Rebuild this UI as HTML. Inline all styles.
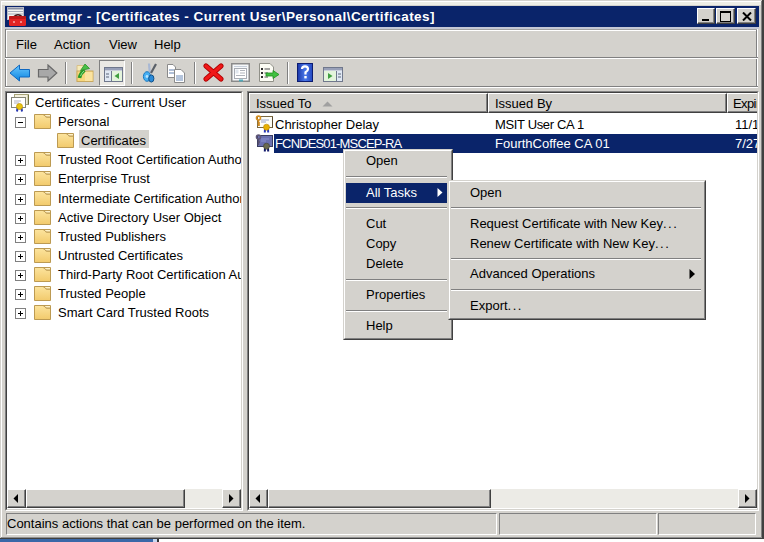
<!DOCTYPE html><html><head><meta charset="utf-8"><style>
*{margin:0;padding:0;box-sizing:border-box}
html,body{width:764px;height:542px;overflow:hidden;background:#d4d2cd}
body{position:relative;font-family:"Liberation Sans",sans-serif;font-size:13px;color:#000}
.a{position:absolute}
.t{position:absolute;white-space:pre;line-height:19px;height:19px;font-size:13px}
.w{color:#fff}
.r3{border-top:1px solid #808080;border-left:1px solid #808080;border-right:1px solid #fff;border-bottom:1px solid #fff}
.btn{position:absolute;background:#d4d2cd;border-top:1px solid #fff;border-left:1px solid #fff;border-right:1px solid #404040;border-bottom:1px solid #404040}
.btn>i{position:absolute;left:0;top:0;right:0;bottom:0;border-right:1px solid #808080;border-bottom:1px solid #808080}
.sep{position:absolute;height:2px;border-top:1px solid #808080;border-bottom:1px solid #fff}
.tsep{position:absolute;width:2px;height:22px;top:62px;border-left:1px solid #808080;border-right:1px solid #fff}
</style></head><body>

<svg width="0" height="0" style="position:absolute">
<defs>
<linearGradient id="gfold" x1="0" y1="0" x2="0" y2="1"><stop offset="0" stop-color="#fce49e"/><stop offset="1" stop-color="#f2ca6c"/></linearGradient>
<linearGradient id="ghelp" x1="0" y1="0" x2="1" y2="0"><stop offset="0" stop-color="#1a36a8"/><stop offset="0.5" stop-color="#4a78e8"/><stop offset="1" stop-color="#2448c0"/></linearGradient>
<linearGradient id="gback" x1="0" y1="0" x2="0" y2="1"><stop offset="0" stop-color="#6cc8ff"/><stop offset="1" stop-color="#0a84e0"/></linearGradient>
<symbol id="icfold" viewBox="0 0 17 16">
 <path d="M0.5 1.5 H9 Q10.5 1.5 11 3 Q11.5 4 13 4 H16.5 V15.5 H0.5 Z" fill="url(#gfold)" stroke="#bc9a52" stroke-width="1"/>
 <path d="M9 1.5 H16.5 V4 H13 Q11.5 4 11 3 Q10.5 1.5 9 1.5Z" fill="#fff2c8" stroke="#bc9a52" stroke-width="1"/>
</symbol>
<symbol id="icplus" viewBox="0 0 11 11">
 <rect x="0.5" y="0.5" width="10" height="10" fill="#fff" stroke="#808080"/>
 <rect x="3" y="5" width="5" height="1" fill="#000"/><rect x="5" y="3" width="1" height="5" fill="#000"/>
</symbol>
<symbol id="icminus" viewBox="0 0 11 11">
 <rect x="0.5" y="0.5" width="10" height="10" fill="#fff" stroke="#808080"/>
 <rect x="3" y="5" width="5" height="1" fill="#000"/>
</symbol>
<symbol id="icroot" viewBox="0 0 18 18">
 <rect x="3.5" y="0.5" width="14" height="10" fill="#f4f0dc" stroke="#a8a478"/>
 <path d="M17.5 1 V10.5" stroke="#707040" stroke-width="1.5"/>
 <rect x="0.5" y="3.5" width="14" height="10" fill="#fff" stroke="#868676"/>
 <path d="M3 7 H10 M3 9 H8" stroke="#b0b0c0" stroke-width="1"/>
 <path d="M6.5 14 L6 17.5 M10.5 14 L11 17.5" stroke="#2838b0" stroke-width="2"/>
 <circle cx="8.5" cy="12.5" r="3" fill="#e8c410" stroke="#c09000" stroke-width="0.7"/>
</symbol>
<symbol id="iccert" viewBox="0 0 18 18">
 <rect x="2.5" y="1.5" width="15" height="11" fill="#fdfdf6" stroke="#7a6840"/>
 <path d="M17.5 2 V12.5" stroke="#5a4a30" stroke-width="1"/>
 <path d="M6 5 H14 M6 7 H11" stroke="#98a4cc" stroke-width="1"/>
 <circle cx="3.5" cy="3" r="2" fill="none" stroke="#d89020" stroke-width="1.6"/>
 <path d="M3.5 5 V11 M3.5 8 H5 M3.5 10 H5" stroke="#d08a20" stroke-width="1.5"/>
 <path d="M10 13.5 L9.8 17.5 M13 13.5 L13.2 17.5" stroke="#2838b8" stroke-width="2"/>
 <circle cx="11.5" cy="12.2" r="3" fill="#e8b000" stroke="#b88800" stroke-width="0.6"/>
</symbol>
<symbol id="iccertsel" viewBox="0 0 18 18">
 <rect x="2.5" y="1.5" width="15" height="11" fill="#6a70b0" stroke="#383c60"/>
 <path d="M6 5 H14 M6 7 H11" stroke="#8890d0" stroke-width="1"/>
 <circle cx="3.5" cy="3" r="2" fill="none" stroke="#605878" stroke-width="1.6"/>
 <path d="M3.5 5 V11 M3.5 8 H5" stroke="#585070" stroke-width="1.5"/>
 <path d="M10 13.5 L9.8 17.5 M13 13.5 L13.2 17.5" stroke="#10186a" stroke-width="2"/>
 <circle cx="11.5" cy="12.2" r="3" fill="#6a6a50" stroke="#404030" stroke-width="0.6"/>
</symbol>
</defs></svg>

<div class="a" style="left:0;top:539px;width:153px;height:3px;background:#3a68a8"></div>
<div class="a" style="left:153px;top:539px;width:4px;height:3px;background:#c8d8f0"></div>
<div class="a" style="left:157px;top:539px;width:2px;height:3px;background:#333"></div>
<div class="a" style="left:159px;top:539px;width:605px;height:3px;background:#fff"></div>
<div class="a" style="left:1px;top:1px;width:761px;height:1px;background:#fff"></div>
<div class="a" style="left:2px;top:2px;width:759px;height:3px;background:#eeeee6"></div>
<div class="a" style="left:1px;top:1px;width:1px;height:537px;background:#fff"></div>
<div class="a" style="left:762px;top:0;width:2px;height:539px;background:#404040"></div>
<div class="a" style="left:761px;top:1px;width:1px;height:537px;background:#808080"></div>
<div class="a" style="left:0;top:538px;width:764px;height:1px;background:#404040"></div>
<div class="a" style="left:1px;top:537px;width:761px;height:1px;background:#909090"></div>
<div class="a" style="left:5px;top:6px;width:754px;height:21px;background:#0a246a"></div>
<svg class="a" style="left:7px;top:7px" width="19" height="19" viewBox="0 0 19 19">
<rect x="0.5" y="0.5" width="16" height="12" fill="#f4f4f0" stroke="#b8bcc8"/>
<rect x="1" y="1" width="15" height="1.5" fill="#8890a4"/>
<rect x="1" y="4" width="15" height="1" fill="#a8aebc"/>
<rect x="1" y="6.5" width="15" height="1" fill="#a8aebc"/>
<path d="M7 9.5 Q11 6 15 9.5" fill="none" stroke="#401818" stroke-width="1.6"/>
<rect x="2" y="9" width="17" height="10" rx="1.5" fill="#e42424"/>
<rect x="2" y="9" width="17" height="3" rx="1" fill="#c01818"/>
<circle cx="7" cy="15" r="1" fill="#f8a8a8"/><circle cx="14" cy="15" r="1" fill="#f8a8a8"/>
</svg>
<div class="a w" style="left:29px;top:7px;font-weight:bold;font-size:13.5px;letter-spacing:0.47px;line-height:19px;white-space:pre">certmgr - [Certificates - Current User\Personal\Certificates]</div>
<div class="btn" style="left:697px;top:8px;width:18px;height:16px"><i></i><div class="a" style="left:4px;top:10px;width:7px;height:2px;background:#000"></div></div>
<div class="btn" style="left:716px;top:8px;width:19px;height:16px"><i></i><div class="a" style="left:3px;top:2px;width:11px;height:11px;border:1px solid #000;border-top-width:2px"></div></div>
<div class="btn" style="left:737px;top:8px;width:19px;height:16px"><i></i><svg class="a" style="left:4px;top:3px" width="10" height="9"><path d="M1 0.5 L9 8.5 M9 0.5 L1 8.5" stroke="#000" stroke-width="2"/></svg></div>
<div class="a" style="left:5px;top:27px;width:754px;height:2px;background:#c4c8d6"></div>
<div class="a" style="left:5px;top:29px;width:753px;height:1px;background:#a0a0a0"></div>
<div class="a" style="left:5px;top:30px;width:753px;height:1px;background:#fff"></div>
<div class="a" style="left:756px;top:30px;width:1px;height:57px;background:#808080"></div>
<div class="a" style="left:757px;top:29px;width:1px;height:59px;background:#fff"></div>
<div class="a" style="left:5px;top:29px;width:1px;height:58px;background:#808080"></div>
<div class="a" style="left:6px;top:30px;width:1px;height:57px;background:#fff"></div>
<div class="a" style="left:5px;top:57px;width:753px;height:1px;background:#808080"></div>
<div class="a" style="left:5px;top:58px;width:753px;height:1px;background:#fff"></div>
<div class="a" style="left:5px;top:86px;width:753px;height:1px;background:#808080"></div>
<div class="a" style="left:5px;top:87px;width:753px;height:1px;background:#fff"></div>
<div class="t" style="left:16px;top:35px">File</div>
<div class="t" style="left:54px;top:35px">Action</div>
<div class="t" style="left:109px;top:35px">View</div>
<div class="t" style="left:154px;top:35px">Help</div>
<svg class="a" style="left:9px;top:64px" width="24" height="18" viewBox="0 0 24 18">
<path d="M1 9 L10.5 1 V5.5 H20.5 V13 H10.5 V17 Z" fill="url(#gback)" stroke="#1068c0" stroke-width="1"/>
</svg>
<svg class="a" style="left:37px;top:64px" width="22" height="18" viewBox="0 0 22 18">
<path d="M19.8 9 L11 1 V5.5 H1.5 V13 H11 V17 Z" fill="#a8a8a8" stroke="#686868" stroke-width="1.2"/>
</svg>
<div class="tsep" style="left:65px"></div>
<svg class="a" style="left:76px;top:63px" width="18" height="20" viewBox="0 0 18 20">
<path d="M1 2.5 H8 V18.5 H1 Z" fill="#f6eab8" stroke="#d8c088"/>
<rect x="1" y="8" width="16" height="10.5" fill="#f8d77c" stroke="#c8a860"/>
<rect x="9" y="9" width="7.5" height="9" fill="#fbe3a0"/>
<path d="M3.5 15 Q4.5 10 8.5 7" fill="none" stroke="#2a9a2a" stroke-width="3.6"/>
<path d="M4.5 7.5 L9 1 L13.5 5.5 Z" fill="#48c048" stroke="#2a902a" stroke-width="0.8"/>
<path d="M4.5 13 Q5.5 10 8 8" fill="none" stroke="#8ee08e" stroke-width="1"/>
</svg>
<div class="a" style="left:99px;top:60px;width:26px;height:26px;background:#ebe9e4;border-top:1px solid #808080;border-left:1px solid #808080;border-right:1px solid #fff;border-bottom:1px solid #fff"></div>
<svg class="a" style="left:104px;top:67px" width="19" height="15" viewBox="0 0 19 15">
<rect x="0.5" y="0.5" width="18" height="14" fill="#fff" stroke="#70788c"/>
<rect x="1" y="1" width="17" height="2.5" fill="#98a0b8"/>
<rect x="1" y="4" width="6" height="10" fill="#e0e8f4"/>
<path d="M7.5 4 V14" stroke="#70788c"/>
<rect x="8" y="4" width="10" height="10" fill="#e4f4dc"/>
<path d="M2 7 H5 M2 10 H5" stroke="#5a6478" stroke-width="1"/>
<path d="M15 6 L10.5 9 L15 12 Z" fill="#40a040"/>
</svg>
<div class="tsep" style="left:131px"></div>
<svg class="a" style="left:142px;top:62px" width="16" height="21" viewBox="0 0 16 21">
<path d="M7 1.5 L7.8 11" stroke="#a8b8d4" stroke-width="2.2"/>
<path d="M14 2 L9 11" stroke="#5a6068" stroke-width="2.2"/>
<ellipse cx="5" cy="14.5" rx="3.6" ry="4.8" fill="#48b0f4" stroke="#1a78c0" stroke-width="1"/>
<ellipse cx="9.3" cy="16.5" rx="2.6" ry="3.6" fill="#2a8ad8" stroke="#105088" stroke-width="1"/>
<circle cx="5" cy="14.5" r="1.4" fill="#b8e4ff"/>
</svg>
<svg class="a" style="left:166px;top:64px" width="21" height="19" viewBox="0 0 21 19">
<path d="M1.5 0.5 H7 L9.5 3 V13.5 H1.5 Z" fill="#fff" stroke="#8a8a8a"/>
<path d="M3 6 H8 M3 9 H8" stroke="#6080b0"/>
<path d="M8.5 5.5 H15 L18.5 9 V18.5 H8.5 Z" fill="#fff" stroke="#8a8a8a"/>
<path d="M10 12 H17 M10 14 H17 M10 16 H17" stroke="#6a8ab8"/>
</svg>
<div class="tsep" style="left:194px"></div>
<svg class="a" style="left:203px;top:63px" width="21" height="19" viewBox="0 0 21 19">
<path d="M3 3 L18 16 M18 3 L3 16" stroke="#b00000" stroke-width="5" stroke-linecap="round"/>
<path d="M3 3 L18 16 M18 3 L3 16" stroke="#f01818" stroke-width="3.4" stroke-linecap="round"/>
</svg>
<svg class="a" style="left:231px;top:63px" width="19" height="19" viewBox="0 0 19 19">
<rect x="0.75" y="0.75" width="17.5" height="17.5" fill="#f6f8fa" stroke="#8a8a8a" stroke-width="1.5"/>
<path d="M3 3.5 H16" stroke="#c8d0dc"/>
<rect x="3.5" y="5.5" width="12" height="10" fill="#fff" stroke="#a8acb4"/>
<rect x="4.5" y="6.5" width="3" height="4" fill="#dfe6ee"/>
<path d="M9 7.5 H14 M5 12.5 H14 M9 10 H14" stroke="#b0b4bc"/>
<rect x="8" y="16.5" width="4" height="2" fill="#50a8b8"/>
</svg>
<svg class="a" style="left:259px;top:63px" width="21" height="19" viewBox="0 0 21 19">
<path d="M0.5 0.5 H11 L14.5 4 V18.5 H0.5 Z" fill="#fcfcf4" stroke="#909088"/>
<rect x="2" y="5" width="2" height="2" fill="#303030"/><rect x="2" y="9" width="2" height="2" fill="#303030"/><rect x="2" y="13" width="2" height="2" fill="#303030"/>
<path d="M5.5 6 H11 M5.5 10 H9 M5.5 14 H9" stroke="#505050"/>
<path d="M7 10 H14 V7.5 L20 11.5 L14 15.5 V13 H7 Z" fill="#40c040" stroke="#209020" stroke-width="0.8"/>
</svg>
<div class="tsep" style="left:287px"></div>
<svg class="a" style="left:297px;top:63px" width="16" height="19" viewBox="0 0 16 19">
<rect x="0.5" y="0.5" width="15" height="18" fill="url(#ghelp)" stroke="#0c1c70"/>
<path d="M5 6 Q5 3.3 8 3.3 Q11 3.3 11 6 Q11 8 8.5 9.3 V11.5" fill="none" stroke="#fff" stroke-width="2.2"/>
<rect x="7.3" y="13" width="2.4" height="2.4" fill="#fff"/>
</svg>
<svg class="a" style="left:323px;top:67px" width="20" height="15" viewBox="0 0 20 15">
<rect x="0.5" y="0.5" width="19" height="14" fill="#fff" stroke="#70788c"/>
<rect x="1" y="1" width="18" height="2.5" fill="#98a0b8"/>
<rect x="1" y="4" width="12" height="10" fill="#e4f4dc"/>
<path d="M13.5 4 V14" stroke="#70788c"/>
<rect x="14" y="4" width="5" height="10" fill="#e0e8f4"/>
<path d="M15 7 H18 M15 10 H18" stroke="#5a6478"/>
<path d="M5 6 L9.5 9 L5 12 Z" fill="#40a040"/>
</svg>
<div class="a r3" style="left:5px;top:91px;width:238px;height:420px;background:#fff"></div>
<div class="a" style="left:6px;top:92px;width:236px;height:418px;border-top:1px solid #404040;border-left:1px solid #404040;border-right:1px solid #d4d2cd;border-bottom:1px solid #d4d2cd"></div>
<div class="a r3" style="left:247px;top:91px;width:512px;height:420px;background:#fff"></div>
<div class="a" style="left:248px;top:92px;width:510px;height:418px;border-top:1px solid #404040;border-left:1px solid #404040;border-right:1px solid #d4d2cd;border-bottom:1px solid #d4d2cd"></div>
<div class="a" style="left:7px;top:93px;width:234px;height:396px;overflow:hidden">
<svg class="a" style="left:4px;top:1px" width="18" height="18"><use href="#icroot"/></svg>
<div class="t" style="left:28px;top:0px">Certificates - Current User</div>
<svg class="a" style="left:8px;top:24px" width="11" height="11"><use href="#icminus"/></svg>
<svg class="a" style="left:27px;top:20px" width="17" height="16"><use href="#icfold"/></svg>
<div class="t" style="left:51px;top:19px">Personal</div>
<svg class="a" style="left:50px;top:39px" width="17" height="16"><use href="#icfold"/></svg>
<div class="a" style="left:72px;top:37px;width:70px;height:18px;background:#d4d2cd"></div>
<div class="t" style="left:74px;top:38px">Certificates</div>
<svg class="a" style="left:8px;top:62px" width="11" height="11"><use href="#icplus"/></svg>
<svg class="a" style="left:27px;top:58px" width="17" height="16"><use href="#icfold"/></svg>
<div class="t" style="left:51px;top:57px">Trusted Root Certification Authorities</div>
<svg class="a" style="left:8px;top:81px" width="11" height="11"><use href="#icplus"/></svg>
<svg class="a" style="left:27px;top:77px" width="17" height="16"><use href="#icfold"/></svg>
<div class="t" style="left:51px;top:76px">Enterprise Trust</div>
<svg class="a" style="left:8px;top:101px" width="11" height="11"><use href="#icplus"/></svg>
<svg class="a" style="left:27px;top:97px" width="17" height="16"><use href="#icfold"/></svg>
<div class="t" style="left:51px;top:96px">Intermediate Certification Authorities</div>
<svg class="a" style="left:8px;top:120px" width="11" height="11"><use href="#icplus"/></svg>
<svg class="a" style="left:27px;top:116px" width="17" height="16"><use href="#icfold"/></svg>
<div class="t" style="left:51px;top:115px">Active Directory User Object</div>
<svg class="a" style="left:8px;top:139px" width="11" height="11"><use href="#icplus"/></svg>
<svg class="a" style="left:27px;top:135px" width="17" height="16"><use href="#icfold"/></svg>
<div class="t" style="left:51px;top:134px">Trusted Publishers</div>
<svg class="a" style="left:8px;top:158px" width="11" height="11"><use href="#icplus"/></svg>
<svg class="a" style="left:27px;top:154px" width="17" height="16"><use href="#icfold"/></svg>
<div class="t" style="left:51px;top:153px">Untrusted Certificates</div>
<svg class="a" style="left:8px;top:177px" width="11" height="11"><use href="#icplus"/></svg>
<svg class="a" style="left:27px;top:173px" width="17" height="16"><use href="#icfold"/></svg>
<div class="t" style="left:51px;top:172px">Third-Party Root Certification Authorities</div>
<svg class="a" style="left:8px;top:196px" width="11" height="11"><use href="#icplus"/></svg>
<svg class="a" style="left:27px;top:192px" width="17" height="16"><use href="#icfold"/></svg>
<div class="t" style="left:51px;top:191px">Trusted People</div>
<svg class="a" style="left:8px;top:215px" width="11" height="11"><use href="#icplus"/></svg>
<svg class="a" style="left:27px;top:211px" width="17" height="16"><use href="#icfold"/></svg>
<div class="t" style="left:51px;top:210px">Smart Card Trusted Roots</div>
</div>
<div class="a" style="left:7px;top:489px;width:234px;height:19px;background:#ecebe6"></div>
<div class="btn" style="left:7px;top:489px;width:19px;height:19px"><i></i><svg class="a" style="left:5px;top:4px" width="6" height="9"><path d="M5 0 V9 L0.5 4.5Z" fill="#000"/></svg></div>
<div class="btn" style="left:222px;top:489px;width:19px;height:19px"><i></i><svg class="a" style="left:6px;top:4px" width="6" height="9"><path d="M0 0 V9 L4.5 4.5Z" fill="#000"/></svg></div>
<div class="btn" style="left:26px;top:489px;width:159px;height:19px"><i></i></div>
<div class="a" style="left:249px;top:489px;width:508px;height:19px;background:#ecebe6"></div>
<div class="btn" style="left:249px;top:489px;width:19px;height:19px"><i></i><svg class="a" style="left:5px;top:4px" width="6" height="9"><path d="M5 0 V9 L0.5 4.5Z" fill="#000"/></svg></div>
<div class="btn" style="left:738px;top:489px;width:19px;height:19px"><i></i><svg class="a" style="left:6px;top:4px" width="6" height="9"><path d="M0 0 V9 L4.5 4.5Z" fill="#000"/></svg></div>
<div class="btn" style="left:268px;top:489px;width:223px;height:19px"><i></i></div>
<div class="a" style="left:249px;top:93px;width:508px;height:20px;background:#d4d2cd;overflow:hidden">
<div class="btn" style="left:0px;top:0;width:239px;height:20px"><i></i></div>
<div class="btn" style="left:239px;top:0;width:239px;height:20px"><i></i></div>
<div class="btn" style="left:478px;top:0;width:40px;height:20px"><i></i></div>
<div class="t" style="left:7px;top:1px">Issued To</div>
<svg class="a" style="left:73px;top:8px" width="11" height="6"><path d="M0.5 5.5 L5.5 0.5 L10.5 5.5Z" fill="#a0a0a0"/></svg>
<div class="t" style="left:246px;top:1px">Issued By</div>
<div class="t" style="left:484px;top:1px;letter-spacing:-0.6px">Expiration Date</div>
</div>
<div class="a" style="left:249px;top:113px;width:508px;height:376px;overflow:hidden">
<svg class="a" style="left:6px;top:2px" width="18" height="18"><use href="#iccert"/></svg>
<div class="t" style="left:26px;top:2px">Christopher Delay</div>
<div class="t" style="left:246px;top:2px;letter-spacing:-0.35px">MSIT User CA 1</div>
<div class="t" style="left:486px;top:2px">11/12/2010</div>
<div class="a" style="left:25px;top:21px;width:483px;height:19px;background:#0a246a"></div>
<svg class="a" style="left:6px;top:21px" width="18" height="18"><use href="#iccertsel"/></svg>
<div class="t w" style="left:26px;top:21px;letter-spacing:-0.85px">FCNDES01-MSCEP-RA</div>
<div class="t w" style="left:246px;top:21px">FourthCoffee CA 01</div>
<div class="t w" style="left:486px;top:21px">7/27/2010</div>
</div>
<div class="a r3" style="left:6px;top:513px;width:491px;height:22px"></div>
<div class="a r3" style="left:499px;top:513px;width:158px;height:22px"></div>
<div class="a r3" style="left:658px;top:513px;width:98px;height:22px"></div>
<div class="t" style="left:7px;top:514px">Contains actions that can be performed on the item.</div>
<div class="a" style="left:343px;top:149px;width:110px;height:191px;background:#d4d2cd;border-top:1px solid #d4d2cd;border-left:1px solid #d4d2cd;border-right:1px solid #404040;border-bottom:1px solid #404040"><div class="a" style="left:0;top:0;right:0;bottom:0;border-top:1px solid #fff;border-left:1px solid #fff;border-right:1px solid #808080;border-bottom:1px solid #808080"></div></div>
<div class="a" style="left:346px;top:183px;width:101px;height:20px;background:#0a246a"></div>
<div class="sep" style="left:346px;top:176px;width:101px"></div>
<div class="sep" style="left:346px;top:207px;width:101px"></div>
<div class="sep" style="left:346px;top:279px;width:101px"></div>
<div class="sep" style="left:346px;top:310px;width:101px"></div>
<div class="t" style="left:366px;top:151px">Open</div>
<div class="t w" style="left:366px;top:183px">All Tasks</div>
<div class="t" style="left:366px;top:214px">Cut</div>
<div class="t" style="left:366px;top:234px">Copy</div>
<div class="t" style="left:366px;top:254px">Delete</div>
<div class="t" style="left:366px;top:285px">Properties</div>
<div class="t" style="left:366px;top:316px">Help</div>
<svg class="a" style="left:437px;top:188px" width="6" height="9"><path d="M0.5 0 V9 L5.5 4.5Z" fill="#fff"/></svg>
<div class="a" style="left:448px;top:180px;width:258px;height:140px;background:#d4d2cd;border-top:1px solid #d4d2cd;border-left:1px solid #d4d2cd;border-right:1px solid #404040;border-bottom:1px solid #404040"><div class="a" style="left:0;top:0;right:0;bottom:0;border-top:1px solid #fff;border-left:1px solid #fff;border-right:1px solid #808080;border-bottom:1px solid #808080"></div></div>
<div class="sep" style="left:451px;top:207px;width:250px"></div>
<div class="sep" style="left:451px;top:258px;width:250px"></div>
<div class="sep" style="left:451px;top:289px;width:250px"></div>
<div class="t" style="left:470px;top:183px">Open</div>
<div class="t" style="left:470px;top:214px">Request Certificate with New Key<span style="letter-spacing:1.5px">...</span></div>
<div class="t" style="left:470px;top:234px">Renew Certificate with New Key<span style="letter-spacing:1.5px">...</span></div>
<div class="t" style="left:470px;top:264px">Advanced Operations</div>
<div class="t" style="left:470px;top:296px">Export<span style="letter-spacing:1.5px">...</span></div>
<svg class="a" style="left:689px;top:269px" width="7" height="10"><path d="M0.5 0 V10 L6 5Z" fill="#000"/></svg>
</body></html>
